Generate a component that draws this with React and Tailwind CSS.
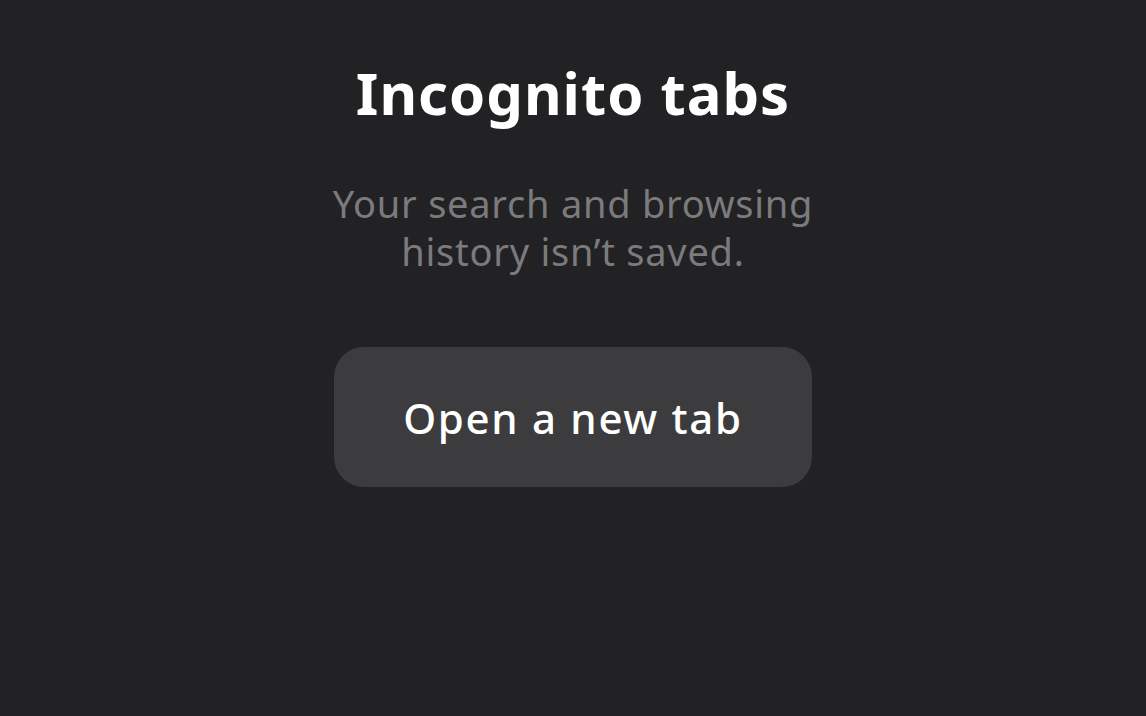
export default function App() {
  return (
    <div
      className="w-[1146px] h-[716px] bg-[#222224] flex flex-col items-center overflow-hidden"
      style={{ fontFamily: '"Noto Sans", "Open Sans", sans-serif' }}
    >
      <h1 className="mt-[56px] text-[58px] leading-[74px] font-bold text-white tracking-[1px]">
        Incognito tabs
      </h1>
      <p className="mt-[49px] text-[38px] leading-[48px] text-[#7b7b7d] text-center tracking-[0.75px]">
        Your search and browsing
        <br />
        history isn’t saved.
      </p>
      <button className="mt-[72px] w-[478px] h-[140px] rounded-[30px] bg-[#3c3c3e] text-[42px] font-medium text-white tracking-[1.7px]">
        Open a new tab
      </button>
    </div>
  );
}
